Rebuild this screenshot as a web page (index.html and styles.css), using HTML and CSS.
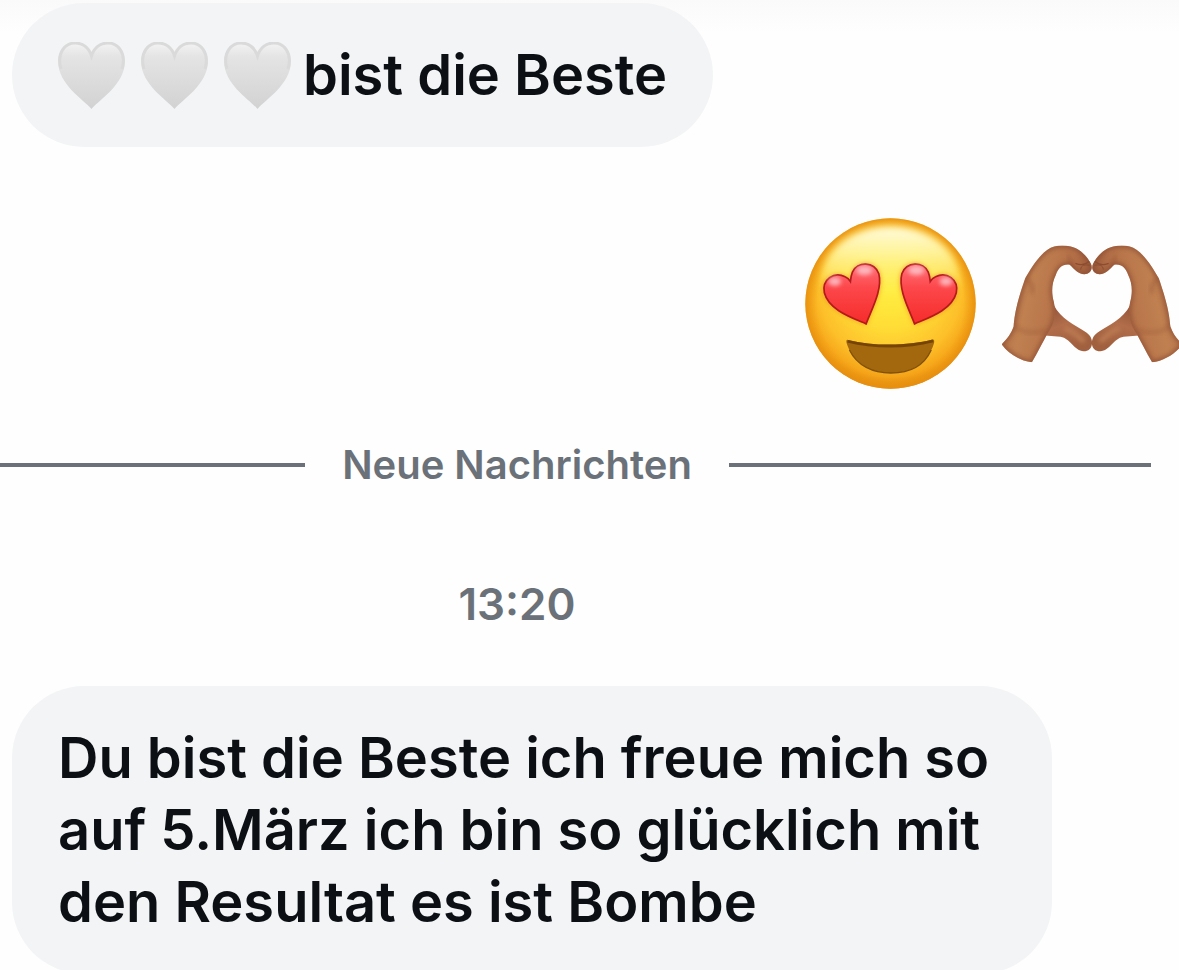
FILE: index.html
```
<!DOCTYPE html>
<html lang="de">

<head>
    <meta charset="UTF-8" />
    <meta name="viewport" content="width=device-width, initial-scale=1.0" />
    <title>Chat</title>
    <link rel="stylesheet" href="styles.css">
</head>

<body>
    <!-- Shared shapes -->
    <svg class="defs" aria-hidden="true">
        <defs>
            <linearGradient id="white-heart" x1="0" y1="0" x2="0" y2="1">
                <stop offset="0" stop-color="#f4f4f4" />
                <stop offset="0.22" stop-color="#e4e4e4" />
                <stop offset="1" stop-color="#d2d2d2" />
            </linearGradient>
            <symbol id="heart" viewBox="0 0 67 67">
                <path d="M33.500 67 C25 57 1 43 0 20 C0 8 8 0 17 0 C25 0 31 5 33.500 12 C36 5 42 0 50 0 C59 0 67 8 67 20 C66 43 42 57 33.500 67 Z" fill="url(#white-heart)" />
                <path d="M3 27 C-2 10 8 1 17 1 C25 1 31 6 33.500 14 C36 6 42 1 50 1 C59 1 69 10 64 27" fill="none" stroke="#dadada" stroke-width="3" />
            </symbol>
        </defs>
    </svg>

    <main class="conversation">
        <div class="bubble">
            <span class="hearts" role="img" aria-label="Drei weiße Herzen">
                <svg class="heart"><use href="#heart" /></svg>
                <svg class="heart"><use href="#heart" /></svg>
                <svg class="heart"><use href="#heart" /></svg>
            </span>
            <p>bist die Beste</p>
        </div>

        <div class="reaction">
            <svg class="face" viewBox="48 54 512 512" role="img" aria-label="Gesicht mit Herzaugen">
                <defs>
                    <radialGradient id="skin" cx="0.5" cy="0.42" r="0.59">
                        <stop offset="0" stop-color="#ffea35" />
                        <stop offset="0.4" stop-color="#ffda36" />
                        <stop offset="0.7" stop-color="#fdc02a" />
                        <stop offset="0.87" stop-color="#f5a318" />
                        <stop offset="1" stop-color="#da7f0c" />
                    </radialGradient>
                    <radialGradient id="rim" cx="0.5" cy="0.5" r="0.5">
                        <stop offset="0.86" stop-color="#ee9c12" stop-opacity="0" />
                        <stop offset="1" stop-color="#e8900f" stop-opacity="0.9" />
                    </radialGradient>
                    <linearGradient id="shine" x1="0" y1="0" x2="0" y2="1">
                        <stop offset="0" stop-color="#fffbe0" />
                        <stop offset="0.25" stop-color="#fff8a8" stop-opacity="0.85" />
                        <stop offset="0.65" stop-color="#fff35a" stop-opacity="0.3" />
                        <stop offset="1" stop-color="#fff03a" stop-opacity="0" />
                    </linearGradient>
                    <linearGradient id="eye" x1="0" y1="0" x2="0" y2="1">
                        <stop offset="0" stop-color="#ff7279" />
                        <stop offset="0.4" stop-color="#fc474b" />
                        <stop offset="1" stop-color="#f62c2a" />
                    </linearGradient>
                    <filter id="soft" x="-50%" y="-50%" width="200%" height="200%">
                        <feGaussianBlur stdDeviation="7" />
                    </filter>
                    <filter id="eye-shadow" x="-30%" y="-30%" width="160%" height="160%">
                        <feGaussianBlur stdDeviation="8" />
                    </filter>
                    <filter id="shine-blur" x="-20%" y="-20%" width="140%" height="140%">
                        <feGaussianBlur stdDeviation="11" />
                    </filter>
                </defs>
                <circle cx="304" cy="310" r="255" fill="url(#skin)" />
                <circle cx="304" cy="310" r="255" fill="url(#rim)" />
                <ellipse cx="304" cy="240" rx="206" ry="160" fill="url(#shine)" filter="url(#shine-blur)" />
                <g id="left-eye">
                    <path d="M231 373 C190 355 117 332 104 280 C95 238 133 214 168 228 L184 239 L189 219 C201 182 255 179 271 220 C284 268 248 328 231 373 Z" fill="#e47b12" opacity="0.7" filter="url(#eye-shadow)" />
                    <path d="M231 371 C190 353 119 330 106 278 C98 238 135 214 168 230 C176 233 181 239 184 244 C185 234 186 225 190 216 C204 184 255 183 269 221 C281 268 247 328 231 371 Z" fill="url(#eye)" stroke="#b5181d" stroke-width="5" />
                    <ellipse cx="137" cy="244" rx="19" ry="13" fill="#ffc3c9" opacity="0.85" filter="url(#soft)" />
                    <ellipse cx="226" cy="211" rx="24" ry="14" fill="#ffc3c9" opacity="0.85" filter="url(#soft)" />
                </g>
                <use href="#left-eye" transform="matrix(-1 0 0 1 607 0)" />
                <path d="M177 419 C250 438 355 438 430 418 C435 417 436 422 434 430 C415 491 366 518 305 518 C240 518 190 484 173 430 C171 423 171 417 177 419 Z" fill="#a3670e" />
                <path d="M177 419 C250 438 355 438 430 418 L433 426 C350 448 252 446 174 427 Z" fill="#754405" />
                <path d="M181 449 C204 496 251 518 305 518 C361 518 405 495 426 449" fill="none" stroke="#80500a" stroke-width="4" />
            </svg>

            <svg class="hands" viewBox="35 52 542 357" role="img" aria-label="Hände formen ein Herz">
                <defs>
                    <linearGradient id="arm" x1="0" y1="0" x2="1" y2="0.3">
                        <stop offset="0" stop-color="#ac6a45" />
                        <stop offset="0.4" stop-color="#c08050" />
                        <stop offset="0.75" stop-color="#b47048" />
                        <stop offset="1" stop-color="#985839" />
                    </linearGradient>
                    <linearGradient id="thumb" x1="0" y1="0" x2="0.4" y2="1">
                        <stop offset="0" stop-color="#8e4f36" />
                        <stop offset="0.5" stop-color="#b16d4a" />
                        <stop offset="1" stop-color="#a1603f" />
                    </linearGradient>
                    <clipPath id="arm-shape">
                        <path d="M34 352 C52 333 62 320 70 298 C73 260 80 225 105 153 C120 126 145 86 172 67 C190 54 215 52 242 57 C272 64 291 88 302 108 C311 125 300 141 283 141 C264 140 252 124 239 112 C217 109 205 121 197 143 C185 168 183 194 191 224 C199 260 193 290 171 321 C158 346 143 375 125 406 C88 401 54 380 34 352 Z" />
                    </clipPath>
                    <filter id="blur" x="-50%" y="-50%" width="200%" height="200%">
                        <feGaussianBlur stdDeviation="6" />
                    </filter>
                </defs>
                <g id="left-hand">
                    <path d="M190 232 C213 277 252 292 289 316 C315 333 311 373 281 373 C252 371 242 334 211 329 L164 325 Z" fill="url(#thumb)" />
                    <path d="M222 305 C250 309 263 330 283 344" fill="none" stroke="#bd7b53" stroke-width="14" filter="url(#blur)" />
                    <g clip-path="url(#arm-shape)">
                        <rect x="30" y="50" width="280" height="360" fill="url(#arm)" />
                        <path d="M34 352 C52 333 62 320 70 298 C73 260 80 225 105 153 C120 126 145 86 172 67 C190 54 215 52 242 57 C272 64 291 88 302 108 C311 125 300 141 283 141 C264 140 252 124 239 112 C217 109 205 121 197 143 C185 168 183 194 191 224 C199 260 193 290 171 321 C158 346 143 375 125 406 C88 401 54 380 34 352 Z" fill="none" stroke="#8f5036" stroke-width="13" opacity="0.8" filter="url(#blur)" />
                        <path d="M71 298 C105 320 135 322 169 309" fill="none" stroke="#985437" stroke-width="10" opacity="0.4" filter="url(#blur)" />
                        <path d="M108 151 C119 165 131 178 125 198" fill="none" stroke="#985437" stroke-width="9" opacity="0.6" filter="url(#blur)" />
                        <path d="M235 85 C239 98 240 108 248 118" fill="none" stroke="#8a4a30" stroke-width="6" opacity="0.6" filter="url(#blur)" />
                        <path d="M256 108 C276 116 287 112 298 102" fill="none" stroke="#8c4c32" stroke-width="4" />
                        <path d="M272 127 C272 113 286 111 299 114" fill="none" stroke="#8c4c32" stroke-width="3" />
                    </g>
                </g>
                <use href="#left-hand" transform="matrix(-1 0 0 1 612 0)" />
            </svg>
        </div>

        <div class="divider">
            <span>Neue Nachrichten</span>
        </div>

        <time class="timestamp" datetime="13:20">13:20</time>

        <div class="bubble bubble-long">
            <p>Du bist die Beste ich freue mich so auf 5.März ich bin so glücklich mit den Resultat es ist Bombe</p>
        </div>
    </main>
</body>

</html>
```
FILE: styles.css
```
body {
    margin: 0;
    font-family: Inter, sans-serif;
    font-weight: 600;
    color: #0c1014;
    background: linear-gradient(#fafafa, #fefefe 32px, #fefefe);
    overflow: hidden;
}

.defs {
    position: absolute;
    width: 0;
    height: 0;
}

.conversation {
    display: flex;
    flex-direction: column;
    align-items: flex-start;
    padding: 3px 28px 0 12px;
}

.bubble {
    display: flex;
    align-items: center;
    gap: 12px;
    box-sizing: border-box;
    max-width: 1040px;
    padding: 36px 46px;
    border-radius: 72px;
    background-color: #f3f4f6;
    font-size: 56px;
    line-height: 72px;
}

.bubble p {
    margin: 0;
}

.hearts {
    display: flex;
    gap: 16px;
}

.heart {
    width: 67px;
    height: 67px;
}

.reaction {
    display: flex;
    align-items: center;
    align-self: flex-end;
    gap: 26px;
    margin: 71px -31px 0 0;
}

.face {
    width: 171px;
    height: 171px;
}

.hands {
    width: 180px;
    height: 120px;
}

/* The left part runs past the edge of the screen */
.divider,
.timestamp {
    align-self: stretch;
    margin-left: -129px;
    color: #6b7178;
    text-align: center;
    font-size: 40px;
    line-height: 48px;
}

.divider {
    display: flex;
    align-items: center;
    gap: 37px;
    margin-top: 52px;
}

.divider::before,
.divider::after {
    content: "";
    flex: 1;
    height: 4px;
    background-color: #6b7178;
}

.timestamp {
    margin-top: 91px;
    font-size: 44px;
}

.bubble-long {
    margin-top: 58px;
}
```
